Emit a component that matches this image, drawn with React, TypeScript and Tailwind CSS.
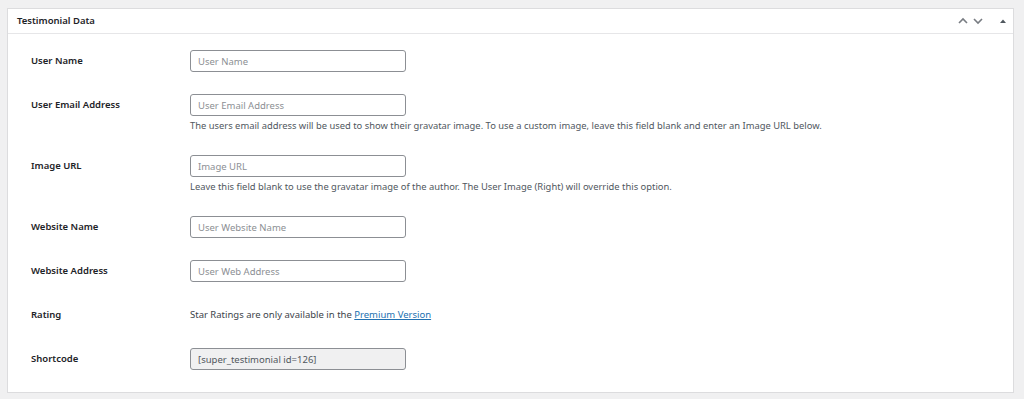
import React from "react";

type Row = {
  label: string;
  placeholder?: string;
  description?: React.ReactNode;
  value?: string;
  readOnly?: boolean;
  text?: React.ReactNode;
};

const rows: Row[] = [
  { label: "User Name", placeholder: "User Name" },
  {
    label: "User Email Address",
    placeholder: "User Email Address",
    description:
      "The users email address will be used to show their gravatar image. To use a custom image, leave this field blank and enter an Image URL below.",
  },
  {
    label: "Image URL",
    placeholder: "Image URL",
    description:
      "Leave this field blank to use the gravatar image of the author. The User Image (Right) will override this option.",
  },
  { label: "Website Name", placeholder: "User Website Name" },
  { label: "Website Address", placeholder: "User Web Address" },
  {
    label: "Rating",
    text: (
      <span>
        Star Ratings are only available in the{" "}
        <a href="#" className="text-[#2271b1] underline">
          Premium Version
        </a>
      </span>
    ),
  },
  { label: "Shortcode", value: "[super_testimonial id=126]", readOnly: true },
];

export default function App() {
  return (
    <div
      className="min-h-screen w-full bg-[#f0f0f1] pt-2 pl-[7px] pr-[10px] text-[9.5px] text-[#1d2327]"
      style={{ fontFamily: '"Noto Sans", "Open Sans", sans-serif' }}
    >
      <div className="border border-[#dcdcde] bg-white">
        {/* Header */}
        <div className="flex h-[25px] items-center justify-between border-b border-[#e6e6e8] pl-[9px] pr-[6px]">
          <h2 className="text-[9.5px] font-semibold text-[#1d2327]">Testimonial Data</h2>
          <div className="flex items-center text-[#787c82]">
            <svg width="12" height="10" viewBox="0 0 12 10" className="mr-[3px]">
              <path d="M2 7 L6 3 L10 7" fill="none" stroke="currentColor" strokeWidth="1.6" />
            </svg>
            <svg width="12" height="10" viewBox="0 0 12 10" className="mr-[15px]">
              <path d="M2 3 L6 7 L10 3" fill="none" stroke="currentColor" strokeWidth="1.6" />
            </svg>
            <svg width="8" height="10" viewBox="0 0 8 10">
              <path d="M1 7 L4 3.5 L7 7 Z" fill="#50575e" />
            </svg>
          </div>
        </div>

        {/* Body */}
        <div className="pt-[5px] pb-[11px]">
          {rows.map((row) => (
            <div key={row.label} className="flex py-[11px] pl-[23px]">
              <div className="flex h-[22px] w-[159px] items-center font-semibold text-[#1d2327]">
                {row.label}
              </div>
              <div className="flex flex-col">
                {row.text ? (
                  <div className="flex h-[22px] items-center text-[#3c434a]">{row.text}</div>
                ) : (
                  <input
                    type="text"
                    readOnly={row.readOnly}
                    defaultValue={row.value}
                    placeholder={row.placeholder}
                    className={`h-[22px] w-[216px] rounded-[3px] border border-[#8c8f94] px-[7px] text-[9.5px] outline-none placeholder:text-[#8c8f94] ${
                      row.readOnly ? "bg-[#f0f0f1] text-[#50575e]" : "bg-white text-[#2c3338]"
                    }`}
                  />
                )}
                {row.description && (
                  <p className="mt-[3px] text-[9.4px] leading-[14px] text-[#50575e]">{row.description}</p>
                )}
              </div>
            </div>
          ))}
        </div>
      </div>
    </div>
  );
}
